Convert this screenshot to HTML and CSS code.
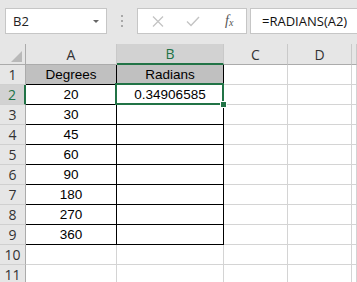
FILE: index.html
```html
<!DOCTYPE html>
<html>
<head>
    <title>RADIANS</title>
    <link rel="stylesheet" href="styles.css">
</head>

<body>
    <div class="formula-bar">
        <div class="name-box">
            <span>B2</span>
            <span class="drop-arrow"></span>
        </div>
        <div class="grip">
            <i></i><i></i><i></i>
        </div>
        <div class="func-box">
            <svg class="icon-cancel" width="12" height="11" viewBox="0 0 12 11">
                <path d="M1 0.5 L11 10.5 M11 0.5 L1 10.5" stroke="#c4c4c4" stroke-width="1.3" fill="none"/>
            </svg>
            <svg class="icon-enter" width="14" height="11" viewBox="0 0 14 11">
                <path d="M1 5.5 L5 9.5 L13 1" stroke="#c4c4c4" stroke-width="1.4" fill="none"/>
            </svg>
            <span class="fx">f<sub>x</sub></span>
        </div>
        <div class="formula-box">=RADIANS(A2)</div>
    </div>

    <table class="sheet">
        <colgroup>
            <col class="col-head">
            <col class="col-a">
            <col class="col-b">
            <col class="col-c">
            <col class="col-d">
            <col class="col-e">
        </colgroup>
        <tr class="col-headers">
            <th class="corner">
                <svg width="11" height="11" viewBox="0 0 11 11"><path d="M11 0 L11 11 L0 11 Z" fill="#b9b9b9"/></svg>
            </th>
            <th>A</th>
            <th class="selected-col">B</th>
            <th>C</th>
            <th>D</th>
            <th></th>
        </tr>
        <tr>
            <th class="row-head">1</th>
            <td class="box title">Degrees</td>
            <td class="box title">Radians</td>
            <td></td><td></td><td></td>
        </tr>
        <tr>
            <th class="row-head selected-row">2</th>
            <td class="box">20</td>
            <td class="box active">0.34906585<span class="handle"></span></td>
            <td></td><td></td><td></td>
        </tr>
        <tr><th class="row-head">3</th><td class="box">30</td><td class="box"></td><td></td><td></td><td></td></tr>
        <tr><th class="row-head">4</th><td class="box">45</td><td class="box"></td><td></td><td></td><td></td></tr>
        <tr><th class="row-head">5</th><td class="box">60</td><td class="box"></td><td></td><td></td><td></td></tr>
        <tr><th class="row-head">6</th><td class="box">90</td><td class="box"></td><td></td><td></td><td></td></tr>
        <tr><th class="row-head">7</th><td class="box">180</td><td class="box"></td><td></td><td></td><td></td></tr>
        <tr><th class="row-head">8</th><td class="box">270</td><td class="box"></td><td></td><td></td><td></td></tr>
        <tr><th class="row-head">9</th><td class="box">360</td><td class="box"></td><td></td><td></td><td></td></tr>
        <tr><th class="row-head">10</th><td></td><td></td><td></td><td></td><td></td></tr>
        <tr><th class="row-head">11</th><td></td><td></td><td></td><td></td><td></td></tr>
    </table>
</body>
</html>
```

FILE: styles.css
```css
body {
    margin: 0;
    padding: 0;
    width: 357px;
    height: 282px;
    overflow: hidden;
    background-color: #fff;
    font-family: "Open Sans", "Liberation Sans", sans-serif;
}

/* formula bar */
.formula-bar {
    display: flex;
    align-items: flex-start;
    height: 44px;
    padding: 8px 0 0 5px;
    box-sizing: border-box;
    background-color: #e6e6e6;
}

.name-box {
    display: flex;
    align-items: center;
    justify-content: space-between;
    width: 102px;
    height: 26px;
    box-sizing: border-box;
    padding: 0 7px 0 7px;
    background-color: #fff;
    border: 1px solid #c6c6c6;
    font-size: 13px;
    color: #222;
}

.drop-arrow {
    width: 0;
    height: 0;
    border-left: 3px solid transparent;
    border-right: 3px solid transparent;
    border-top: 3px solid #666;
}

.grip {
    display: flex;
    flex-direction: column;
    gap: 3px;
    width: 30px;
    padding-top: 7px;
    align-items: center;
}

.grip i {
    display: block;
    width: 2px;
    height: 2px;
    background-color: #a8a8a8;
}

.func-box {
    display: flex;
    align-items: center;
    width: 110px;
    height: 26px;
    box-sizing: border-box;
    background-color: #fff;
    border: 1px solid #c6c6c6;
}

.icon-cancel {
    margin-left: 14px;
}

.icon-enter {
    margin-left: 22px;
}

.fx {
    margin-left: 25px;
    font-family: "Liberation Serif", serif;
    font-style: italic;
    font-size: 14px;
    color: #555;
}

.fx sub {
    font-size: 10px;
    vertical-align: -1px;
}

.formula-box {
    flex: 1;
    height: 26px;
    box-sizing: border-box;
    margin-left: 3px;
    padding-left: 11px;
    line-height: 24px;
    background-color: #fff;
    border: 1px solid #c6c6c6;
    border-right: none;
    font-size: 13px;
    color: #111;
}

/* grid */
.sheet {
    table-layout: fixed;
    border-collapse: separate;
    border-spacing: 0;
    width: 357px;
}

.col-head { width: 26px; }
.col-a { width: 91px; }
.col-b { width: 107px; }
.col-c { width: 64px; }
.col-d { width: 64px; }
.col-e { width: 5px; }

.sheet tr {
    height: 20px;
}

.sheet th,
.sheet td {
    padding: 0;
    line-height: 19px;
    white-space: nowrap;
    overflow: visible;
}

.sheet td {
    border-right: 1px solid #d4d4d4;
    border-bottom: 1px solid #d4d4d4;
    text-align: center;
    font-family: "Liberation Sans", sans-serif;
    font-size: 13.5px;
    color: #000;
}

.col-headers th {
    background-color: #e6e6e6;
    border-right: 1px solid #c9c9c9;
    border-bottom: 1px solid #ababab;
    font-weight: normal;
    font-size: 14px;
    color: #333;
}

.col-headers .corner {
    text-align: right;
    vertical-align: bottom;
    line-height: 0;
    padding: 0 3px 2px 0;
    border-right: 1px solid #ababab;
}

.row-head {
    background-color: #e6e6e6;
    border-right: 1px solid #ababab;
    border-bottom: 1px solid #d0d0d0;
    font-weight: normal;
    font-size: 14px;
    color: #333;
}

.selected-col {
    background-color: #d2d2d2 !important;
    color: #217346 !important;
    border-bottom: 2px solid #217346 !important;
}

.selected-row {
    background-color: #d2d2d2;
    color: #217346;
    border-right: 2px solid #217346;
}

/* bordered data block A1:B9 */
.sheet td.box {
    border-right: 1px solid #000;
    border-bottom: 1px solid #000;
}

.sheet td.title {
    background-color: #c0c0c0;
}

.sheet td.active {
    position: relative;
}

.sheet td.active::after {
    content: "";
    position: absolute;
    top: -2px;
    left: -2px;
    right: -1px;
    bottom: -1px;
    border: 2px solid #217346;
}

.handle {
    position: absolute;
    right: -4px;
    bottom: -4px;
    width: 5px;
    height: 5px;
    background-color: #217346;
    border: 1px solid #fff;
    z-index: 2;
}
```
